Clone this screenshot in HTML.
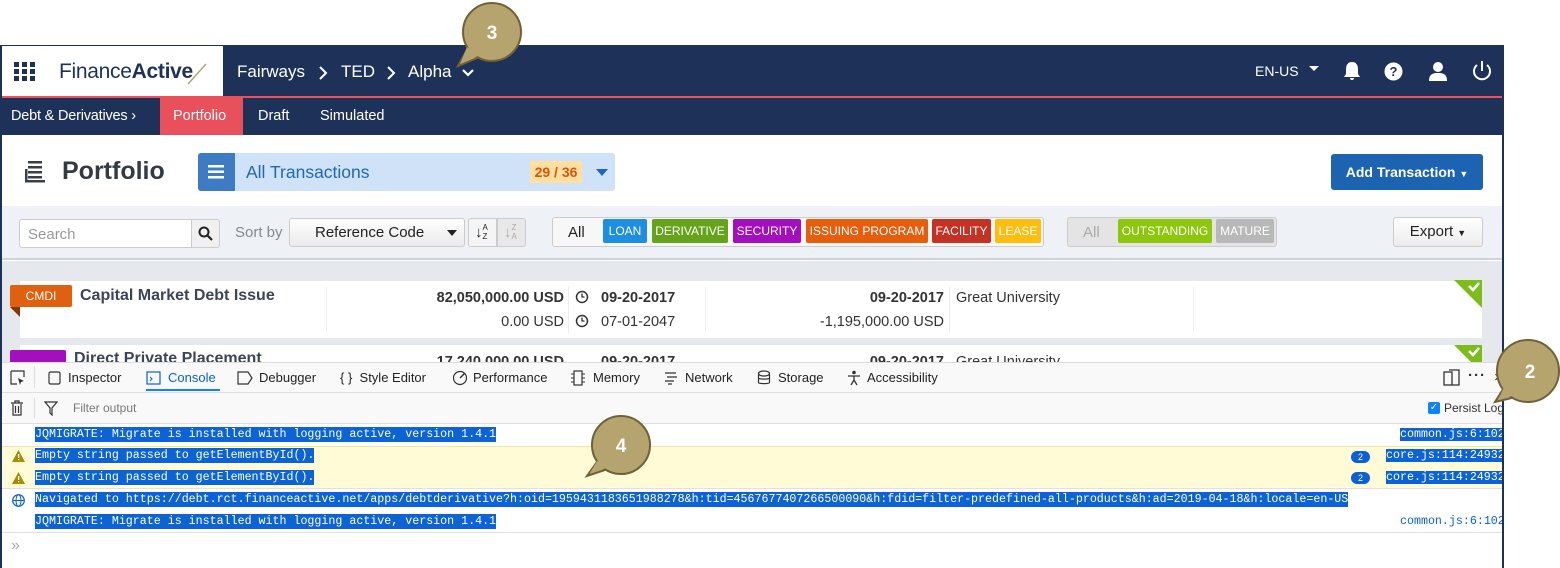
<!DOCTYPE html>
<html><head><meta charset="utf-8">
<style>
*{box-sizing:border-box;margin:0;padding:0}
body{width:1560px;height:568px;overflow:hidden;background:#fff;font-family:"Liberation Sans",Arial,sans-serif;position:relative}
.a{position:absolute}
.mono{font-family:"Liberation Mono",monospace;font-size:11.65px}
.sel{background:#0b63d6;color:#fff;padding:1px 0}
.tag{position:absolute;top:219px;height:24px;color:#fff;font-size:12px;line-height:24px;text-align:center;border-radius:2px}
.dt{font-size:13px;color:#222;top:369px;line-height:18px}
.bc{position:absolute;top:62px;font-size:17px;color:#fff}
</style></head><body>
<div class="a" style="left:0;top:45px;width:1504px;height:523px;border-left:2px solid #1e3259;border-right:2px solid #1e3259;border-top:1px solid #1e3259"></div>
<div class="a" style="left:2px;top:46px;width:1500px;height:50px;background:#1e3259"></div>
<div class="a" style="left:2px;top:46px;width:221px;height:50px;background:#fff"></div>
<svg class="a" style="left:14px;top:62px" width="22" height="20"><g fill="#1e3259"><rect x="0" y="0" width="5" height="5"/><rect x="8" y="0" width="5" height="5"/><rect x="16" y="0" width="5" height="5"/><rect x="0" y="7" width="5" height="5"/><rect x="8" y="7" width="5" height="5"/><rect x="16" y="7" width="5" height="5"/><rect x="0" y="14" width="5" height="5"/><rect x="8" y="14" width="5" height="5"/><rect x="16" y="14" width="5" height="5"/></g></svg>
<div class="a" style="left:59px;top:60px;font-size:21px;color:#1e3259;letter-spacing:-0.3px">Finance<b>Active</b></div>
<svg class="a" style="left:186px;top:62px" width="22" height="24"><line x1="2" y1="22" x2="20" y2="2" stroke="#b5a46e" stroke-width="1.5"/></svg>
<div class="bc" style="left:237px">Fairways</div>
<svg class="a" style="left:318px;top:66px" width="10" height="14"><path d="M2 1L8 7L2 13" stroke="#fff" stroke-width="2" fill="none"/></svg>
<div class="bc" style="left:341px">TED</div>
<svg class="a" style="left:386px;top:66px" width="10" height="14"><path d="M2 1L8 7L2 13" stroke="#fff" stroke-width="2" fill="none"/></svg>
<div class="bc" style="left:408px">Alpha</div>
<svg class="a" style="left:461px;top:68px" width="14" height="10"><path d="M2 2 L7 7 L12 2" stroke="#fff" stroke-width="2.2" fill="none"/></svg>
<div class="a" style="left:1255px;top:63px;font-size:14px;color:#fff">EN-US</div>
<svg class="a" style="left:1309px;top:66px" width="10" height="6"><path d="M0 0H10L5 5Z" fill="#fff"/></svg>
<svg class="a" style="left:1342px;top:60px" width="20" height="22"><path d="M10 2C6 2 4 5 4 9V14L2 17H18L16 14V9C16 5 14 2 10 2Z M8 18A2 2 0 0 0 12 18Z" fill="#fff"/></svg>
<svg class="a" style="left:1384px;top:62px" width="19" height="19"><circle cx="9.5" cy="9.5" r="9" fill="#fff"/><text x="9.5" y="14" font-size="13" font-weight="bold" text-anchor="middle" fill="#1e3259" font-family="Liberation Sans">?</text></svg>
<svg class="a" style="left:1428px;top:60px" width="20" height="22"><circle cx="10" cy="7" r="5" fill="#fff"/><path d="M1 21C1 14 5 13 10 13C15 13 19 14 19 21Z" fill="#fff"/></svg>
<svg class="a" style="left:1471px;top:60px" width="22" height="22"><path d="M6 5A8 8 0 1 0 16 5" stroke="#fff" stroke-width="2" fill="none"/><line x1="11" y1="1" x2="11" y2="11" stroke="#fff" stroke-width="2"/></svg>
<div class="a" style="left:2px;top:96px;width:1500px;height:2px;background:#e8505b"></div>
<div class="a" style="left:2px;top:98px;width:1500px;height:37px;background:#1e3259"></div>
<div class="a" style="left:160px;top:98px;width:83px;height:37px;background:#e8505b"></div>
<div class="a" style="left:11px;top:108px;font-size:14.5px;color:#fff;letter-spacing:-0.2px">Debt &amp; Derivatives &#x203A;</div>
<div class="a" style="left:173px;top:108px;font-size:14.5px;color:#fff">Portfolio</div>
<div class="a" style="left:258px;top:108px;font-size:14.5px;color:#fff">Draft</div>
<div class="a" style="left:320px;top:108px;font-size:14.5px;color:#fff">Simulated</div>
<svg class="a" style="left:24px;top:160px" width="22" height="24"><g fill="#3b3f4a"><rect x="4" y="1" width="14" height="2.5"/><rect x="4" y="6" width="14" height="2.5"/><rect x="4" y="11" width="14" height="2.5"/><rect x="4" y="16" width="14" height="2.5"/><rect x="1" y="9" width="2.5" height="12"/><rect x="1" y="20" width="20" height="2.5"/></g></svg>
<div class="a" style="left:62px;top:157px;font-size:25px;font-weight:bold;color:#333a45">Portfolio</div>
<div class="a" style="left:198px;top:153px;width:417px;height:38px;background:#cfe2f7;border-radius:3px"></div>
<div class="a" style="left:198px;top:153px;width:37px;height:38px;background:#3d7bc3;border-radius:3px 0 0 3px"></div>
<svg class="a" style="left:208px;top:165px" width="16" height="14"><g fill="#fff"><rect y="0" width="16" height="2.5"/><rect y="5.5" width="16" height="2.5"/><rect y="11" width="16" height="2.5"/></g></svg>
<div class="a" style="left:246px;top:162px;font-size:17.5px;color:#1d68b8">All Transactions</div>
<div class="a" style="left:530px;top:161px;width:52px;height:22px;background:#ffe0a0;color:#d9540c;font-weight:bold;font-size:14px;line-height:22px;text-align:center">29 / 36</div>
<svg class="a" style="left:596px;top:169px" width="12" height="7"><path d="M0 0H12L6 7Z" fill="#1d68b8"/></svg>
<div class="a" style="left:1331px;top:154px;width:152px;height:36px;background:#1c63b1;border-radius:3px;color:#fff;font-weight:bold;font-size:14px;line-height:36px;text-align:center">Add Transaction <span style="font-size:9px">&#9660;</span></div>
<div class="a" style="left:2px;top:206px;width:1500px;height:54px;background:#eef1f6;border-bottom:2px solid #cdd3dc"></div>
<div class="a" style="left:19px;top:219px;width:173px;height:29px;background:#fff;border:1px solid #ccc;border-radius:3px 0 0 3px;font-size:15px;color:#999;padding:6px 8px">Search</div>
<div class="a" style="left:191px;top:219px;width:29px;height:29px;background:#f0f0f0;border:1px solid #ccc;border-radius:0 3px 3px 0"></div>
<svg class="a" style="left:198px;top:226px" width="15" height="15"><circle cx="6" cy="6" r="4.5" stroke="#222" stroke-width="2" fill="none"/><line x1="9.5" y1="9.5" x2="14" y2="14" stroke="#222" stroke-width="2.2"/></svg>
<div class="a" style="left:235px;top:224px;font-size:15px;color:#888">Sort by</div>
<div class="a" style="left:289px;top:218px;width:176px;height:29px;background:linear-gradient(#fff,#eaeaea);border:1px solid #ccc;border-radius:3px;font-size:15px;color:#222;padding:5px 0 0 25px">Reference Code</div>
<svg class="a" style="left:447px;top:230px" width="10" height="6"><path d="M0 0H10L5 6Z" fill="#222"/></svg>
<div class="a" style="left:468px;top:218px;width:29px;height:29px;background:#f5f5f5;border:1px solid #ccc;border-radius:3px 0 0 3px;font-size:8px;color:#222;line-height:9px;padding:4px 0 0 6px"><span style="font-size:15px;float:left;line-height:20px">&#8595;</span>A<br>Z</div>
<div class="a" style="left:497px;top:218px;width:29px;height:29px;background:#e8e8e8;border:1px solid #ccc;border-radius:0 3px 3px 0;font-size:8px;color:#aaa;line-height:9px;padding:4px 0 0 6px"><span style="font-size:15px;float:left;line-height:20px">&#8595;</span>Z<br>A</div>
<div class="a" style="left:552px;top:217px;width:492px;height:30px;background:#f7f7f7;border:1px solid #ccc;border-radius:3px"></div>
<div class="a" style="left:568px;top:224px;font-size:15px;color:#222">All</div>
<div class="tag" style="left:603px;width:44px;background:#1e8fe0">LOAN</div>
<div class="tag" style="left:652px;width:76px;background:#64a31a">DERIVATIVE</div>
<div class="tag" style="left:733px;width:68px;background:#a40fbd">SECURITY</div>
<div class="tag" style="left:806px;width:122px;background:#e65e0c">ISSUING PROGRAM</div>
<div class="tag" style="left:932px;width:59px;background:#c43224">FACILITY</div>
<div class="tag" style="left:995px;width:46px;background:#ffbe0f">LEASE</div>
<div class="a" style="left:1067px;top:217px;width:210px;height:30px;background:#e4e4e4;border:1px solid #ccc;border-radius:3px"></div>
<div class="a" style="left:1083px;top:224px;font-size:15px;color:#aaa">All</div>
<div class="tag" style="left:1118px;width:94px;background:#8dc70c">OUTSTANDING</div>
<div class="tag" style="left:1216px;width:58px;background:#b8b8b8">MATURE</div>
<div class="a" style="left:1393px;top:217px;width:90px;height:30px;background:linear-gradient(#fff,#ececec);border:1px solid #ccc;border-radius:3px;font-size:15px;color:#222;text-align:center;line-height:28px">Export <span style="font-size:9px">&#9660;</span></div>
<div class="a" style="left:2px;top:261px;width:1500px;height:101px;background:#e5e8ed"></div>
<div class="a" style="left:20px;top:281px;width:1462px;height:57px;background:#fff"></div>
<div class="a" style="left:10px;top:285px;width:62px;height:22px;background:#e0600f;border-radius:2px;color:#fff;font-size:12px;line-height:22px;text-align:center">CMDI</div>
<svg class="a" style="left:10px;top:307px" width="10" height="10"><path d="M0 0H10V10Z" fill="#8a3608"/></svg>
<div class="a" style="left:80px;top:287px;font-size:16px;font-weight:bold;color:#3c4457">Capital Market Debt Issue</div>
<div class="a" style="left:326px;top:287px;width:1px;height:46px;background:#eee"></div>
<div class="a" style="left:568px;top:287px;width:1px;height:46px;background:#eee"></div>
<div class="a" style="left:705px;top:287px;width:1px;height:46px;background:#eee"></div>
<div class="a" style="left:949px;top:287px;width:1px;height:46px;background:#eee"></div>
<div class="a" style="left:1193px;top:287px;width:1px;height:46px;background:#eee"></div>
<div class="a" style="left:330px;top:290px;width:234px;text-align:right;font-size:14.5px;font-weight:bold;color:#333">82,050,000.00 USD</div>
<div class="a" style="left:330px;top:314px;width:234px;text-align:right;font-size:14.5px;color:#333">0.00 USD</div>
<svg class="a" style="left:575px;top:290px" width="14" height="14"><circle cx="7" cy="7" r="5.5" stroke="#333" stroke-width="1.5" fill="none"/><path d="M7 3.5V7H9.5" stroke="#333" stroke-width="1.3" fill="none"/></svg>
<svg class="a" style="left:575px;top:314px" width="14" height="14"><circle cx="7" cy="7" r="5.5" stroke="#333" stroke-width="1.5" fill="none"/><path d="M7 3.5V7H9.5" stroke="#333" stroke-width="1.3" fill="none"/></svg>
<div class="a" style="left:601px;top:290px;font-size:14.5px;font-weight:bold;color:#333">09-20-2017</div>
<div class="a" style="left:601px;top:314px;font-size:14.5px;color:#333">07-01-2047</div>
<div class="a" style="left:710px;top:290px;width:234px;text-align:right;font-size:14.5px;font-weight:bold;color:#333">09-20-2017</div>
<div class="a" style="left:710px;top:314px;width:234px;text-align:right;font-size:14.5px;color:#333">-1,195,000.00 USD</div>
<div class="a" style="left:956px;top:290px;font-size:14.5px;color:#333">Great University</div>
<svg class="a" style="left:1454px;top:280px" width="28" height="28"><path d="M0 0H28V28Z" fill="#7cbd1c"/><path d="M15 6L19 10L25 3" stroke="#fff" stroke-width="2.5" fill="none"/></svg>
<div class="a" style="left:20px;top:345px;width:1462px;height:17px;background:#fff"></div>
<div class="a" style="left:10px;top:350px;width:56px;height:12px;background:#a40fbd;border-radius:2px 2px 0 0"></div>
<div class="a" style="left:74px;top:350px;font-size:16px;font-weight:bold;color:#3c4457;height:12px;overflow:hidden">Direct Private Placement</div>
<div class="a" style="left:330px;top:354px;width:234px;text-align:right;font-size:14.5px;font-weight:bold;color:#333;height:8px;overflow:hidden">17,240,000.00 USD</div>
<div class="a" style="left:601px;top:354px;font-size:14.5px;font-weight:bold;color:#333;height:8px;overflow:hidden">09-20-2017</div>
<div class="a" style="left:710px;top:354px;width:234px;text-align:right;font-size:14.5px;font-weight:bold;color:#333;height:8px;overflow:hidden">09-20-2017</div>
<div class="a" style="left:956px;top:354px;font-size:14.5px;color:#333;height:8px;overflow:hidden">Great University</div>
<svg class="a" style="left:1454px;top:345px" width="28" height="17"><path d="M0 0H28V28Z" fill="#7cbd1c"/><path d="M15 6L19 10L25 3" stroke="#fff" stroke-width="2.5" fill="none"/></svg>
<div class="a" style="left:2px;top:362px;width:1500px;height:31px;background:#f9f9fa;border-top:1px solid #ddd;border-bottom:1px solid #e0e0e2"></div>
<div class="a" style="left:34px;top:366px;width:1px;height:22px;background:#ddd"></div>
<svg class="a" style="left:10px;top:370px" width="16" height="16"><path d="M1 1H14V7 M1 1V14H7" stroke="#333" stroke-width="1.2" fill="none"/><path d="M8 8L14 11L11 12L10 15Z" fill="#333"/></svg>
<svg class="a" style="left:47px;top:371px" width="15" height="14"><rect x="2" y="1" width="11" height="12" rx="1.5" stroke="#333" stroke-width="1.2" fill="none"/></svg>
<div class="dt a" style="left:68px">Inspector</div>
<div class="a" style="left:146px;top:389px;width:74px;height:2px;background:#0a84ff"></div>
<svg class="a" style="left:146px;top:371px" width="15" height="14"><rect x="1" y="1" width="13" height="12" stroke="#0a60d8" stroke-width="1.2" fill="none"/><path d="M4 6L6 8L4 10" stroke="#0a60d8" fill="none"/></svg>
<div class="dt a" style="left:168px;color:#0a60d8">Console</div>
<svg class="a" style="left:237px;top:371px" width="16" height="14"><path d="M1 1H11L15 7L11 13H1Z" stroke="#333" stroke-width="1.2" fill="none"/></svg>
<div class="dt a" style="left:259px">Debugger</div>
<div class="dt a" style="left:340px">{ }&nbsp; Style Editor</div>
<svg class="a" style="left:452px;top:370px" width="16" height="16"><circle cx="8" cy="8" r="6.5" stroke="#333" stroke-width="1.2" fill="none"/><path d="M8 8L13 3" stroke="#333" stroke-width="1.5"/></svg>
<div class="dt a" style="left:473px">Performance</div>
<svg class="a" style="left:571px;top:370px" width="14" height="16"><rect x="3" y="1" width="8" height="14" stroke="#333" stroke-width="1.2" fill="none"/><path d="M0 4H3M0 8H3M0 12H3M11 4H14M11 8H14M11 12H14" stroke="#333"/></svg>
<div class="dt a" style="left:593px">Memory</div>
<svg class="a" style="left:664px;top:371px" width="14" height="14"><path d="M1 2H12M3 6H13M1 10H10M4 13H8" stroke="#333" stroke-width="1.2"/></svg>
<div class="dt a" style="left:685px">Network</div>
<svg class="a" style="left:757px;top:370px" width="14" height="16"><ellipse cx="7" cy="3.5" rx="5.5" ry="2.5" stroke="#333" stroke-width="1.2" fill="none"/><path d="M1.5 3.5V12.5C1.5 14 12.5 14 12.5 12.5V3.5M1.5 8C1.5 9.5 12.5 9.5 12.5 8" stroke="#333" stroke-width="1.2" fill="none"/></svg>
<div class="dt a" style="left:778px">Storage</div>
<svg class="a" style="left:847px;top:370px" width="14" height="16"><circle cx="7" cy="2.5" r="1.8" fill="#333"/><path d="M1 6H13M7 6V10M7 10L4 15M7 10L10 15" stroke="#333" stroke-width="1.3" fill="none"/></svg>
<div class="dt a" style="left:867px">Accessibility</div>
<svg class="a" style="left:1443px;top:369px" width="18" height="18"><rect x="1" y="3" width="8" height="13" stroke="#333" stroke-width="1.3" fill="none"/><path d="M6 1H16V16H9" stroke="#333" stroke-width="1.3" fill="none"/></svg>
<div class="a" style="left:1468px;top:367px;font-size:15px;color:#333;font-weight:bold;letter-spacing:1px">&middot;&middot;&middot;</div>
<div class="a" style="left:1494px;top:369px;font-size:15px;color:#333">&#215;</div>
<div class="a" style="left:2px;top:393px;width:1500px;height:31px;background:#f9f9fa;border-bottom:1px solid #e0e0e2"></div>
<svg class="a" style="left:10px;top:400px" width="14" height="16"><path d="M1 3H13M5 3V1H9V3M3 4V15H11V4M5.5 6V13M8.5 6V13" stroke="#333" stroke-width="1.2" fill="none"/></svg>
<div class="a" style="left:34px;top:398px;width:1px;height:20px;background:#ddd"></div>
<svg class="a" style="left:44px;top:401px" width="14" height="15"><path d="M1 1H13L8 7V14L6 12V7Z" stroke="#333" stroke-width="1.2" fill="none"/></svg>
<div class="a" style="left:73px;top:401px;font-size:12px;color:#777">Filter output</div>
<div class="a" style="left:1428px;top:402px;width:12px;height:12px;background:#0a84ff;border-radius:2px;color:#fff;font-size:10px;line-height:12px;text-align:center">&#10003;</div>
<div class="a" style="left:1444px;top:401px;font-size:12px;color:#333;width:58px;overflow:hidden;white-space:nowrap">Persist Logs</div>
<div class="a" style="left:2px;top:446px;width:1500px;height:43px;background:#fffbd6;border-top:1px solid #f0e6a0;border-bottom:1px solid #e0e0e0"></div>
<div class="a" style="left:2px;top:532px;width:1500px;height:1px;background:#e0e0e0"></div>
<div class="a mono" style="left:35px;top:428px"><span class="sel">JQMIGRATE: Migrate is installed with logging active, version 1.4.1</span></div>
<div class="a mono" style="left:1400px;top:428px;width:102px;overflow:hidden;white-space:nowrap"><span class="sel">common.js:6:1027</span></div>
<svg class="a" style="left:12px;top:450px" width="13" height="12"><path d="M6.5 0L13 12H0Z" fill="#a88b00"/><rect x="6" y="4" width="1.3" height="4" fill="#fff"/><rect x="6" y="9" width="1.3" height="1.3" fill="#fff"/></svg>
<div class="a mono" style="left:35px;top:449px"><span class="sel">Empty string passed to getElementById().</span></div>
<div class="a" style="left:1351px;top:472px;width:19px;height:12px;background:#0a60d8;border-radius:6px;color:#fff;font-size:9px;line-height:12px;text-align:center">2</div>
<div class="a" style="left:1351px;top:451px;width:19px;height:12px;background:#0a60d8;border-radius:6px;color:#fff;font-size:9px;line-height:12px;text-align:center">2</div>
<div class="a mono" style="left:1386px;top:449px;width:116px;overflow:hidden;white-space:nowrap"><span class="sel">core.js:114:24932</span></div>
<svg class="a" style="left:12px;top:472px" width="13" height="12"><path d="M6.5 0L13 12H0Z" fill="#a88b00"/><rect x="6" y="4" width="1.3" height="4" fill="#fff"/><rect x="6" y="9" width="1.3" height="1.3" fill="#fff"/></svg>
<div class="a mono" style="left:35px;top:471px"><span class="sel">Empty string passed to getElementById().</span></div>
<div class="a mono" style="left:1386px;top:471px;width:116px;overflow:hidden;white-space:nowrap"><span class="sel">core.js:114:24932</span></div>
<svg class="a" style="left:12px;top:494px" width="13" height="13"><circle cx="6.5" cy="6.5" r="5.8" stroke="#0a60d8" stroke-width="1.2" fill="none"/><ellipse cx="6.5" cy="6.5" rx="2.5" ry="5.8" stroke="#0a60d8" fill="none"/><path d="M1 6.5H12" stroke="#0a60d8"/></svg>
<div class="a mono" style="left:35px;top:493px;white-space:nowrap"><span class="sel">Navigated to https://debt.rct.financeactive.net/apps/debtderivative?h:oid=1959431183651988278&amp;h:tid=4567677407266500090&amp;h:fdid=filter-predefined-all-products&amp;h:ad=2019-04-18&amp;h:locale=en-US</span></div>
<div class="a mono" style="left:35px;top:515px"><span class="sel">JQMIGRATE: Migrate is installed with logging active, version 1.4.1</span></div>
<div class="a mono" style="left:1400px;top:515px;width:102px;overflow:hidden;white-space:nowrap;color:#0a60d8">common.js:6:1027</div>
<div class="a" style="left:11px;top:537px;font-size:16px;color:#aaa">&#187;</div>
<svg class="a" style="left:440px;top:0" width="100" height="80"><path d="M28 48 L18 66 L42 56Z" fill="#b5a46e" stroke="#6f6138" stroke-width="2"/><circle cx="52" cy="32" r="29" fill="#b5a46e" stroke="#6f6138" stroke-width="2"/><path d="M27 47 L20 64 L40 55" fill="#b5a46e"/><text x="52" y="39" font-size="19" font-weight="bold" text-anchor="middle" fill="#fff" font-family="Liberation Sans">3</text></svg>
<svg class="a" style="left:1485px;top:336px" width="75" height="80"><path d="M20 50 L10 66 L35 60Z" fill="#b5a46e" stroke="#6f6138" stroke-width="2"/><circle cx="43" cy="35" r="31" fill="#b5a46e" stroke="#6f6138" stroke-width="2"/><path d="M20 49 L13 64 L34 58" fill="#b5a46e"/><text x="45" y="42" font-size="19" font-weight="bold" text-anchor="middle" fill="#fff" font-family="Liberation Sans">2</text></svg>
<svg class="a" style="left:575px;top:410px" width="90" height="70"><path d="M22 52 L12 66 L36 58Z" fill="#b5a46e" stroke="#6f6138" stroke-width="2"/><circle cx="46" cy="35" r="29" fill="#b5a46e" stroke="#6f6138" stroke-width="2"/><path d="M22 51 L15 63 L35 57" fill="#b5a46e"/><text x="46" y="42" font-size="19" font-weight="bold" text-anchor="middle" fill="#fff" font-family="Liberation Sans">4</text></svg>
</body></html>
